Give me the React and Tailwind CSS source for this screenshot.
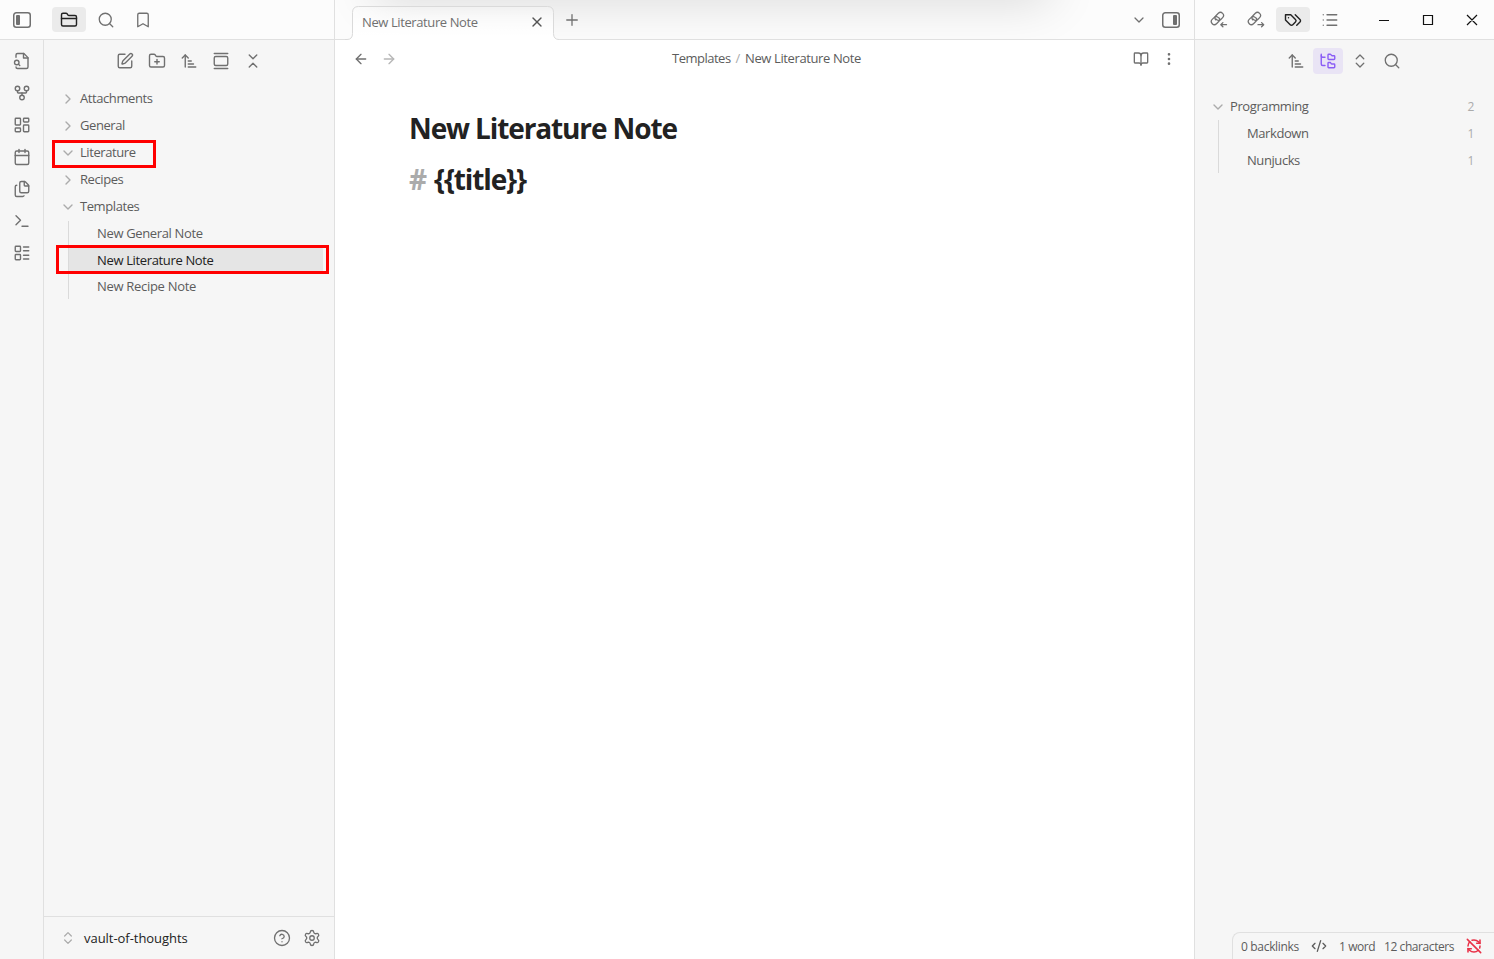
import React from 'react';
import {
  ArrowLeft, ArrowRight, ArrowUpNarrowWide, BookOpen, Bookmark, Calendar, ChevronDown, ChevronRight,
  ChevronsDownUp, ChevronsUpDown, CircleHelp, CodeXml, EllipsisVertical, Files, FolderClosed,
  FolderPlus, FolderTree, GalleryVertical, GitFork, LayoutDashboard, LayoutList, List, Plus,
  RefreshCwOff, Search, Settings, SquarePen, Terminal, X,
} from 'lucide-react';

function SidebarIcon({ right = false }) {
  return (
    <svg width="18" height="18" viewBox="0 0 18 18" fill="none" stroke="currentColor">
      <rect x="0.75" y="1.75" width="16.5" height="14.5" rx="2.5" strokeWidth="1.5" />
      <rect x={right ? 11 : 3} y="4" width="4" height="10" rx="1" fill="currentColor" stroke="none" />
    </svg>
  );
}

function LinkIcon({ out = false }) {
  return (
    <svg width="18" height="18" viewBox="0 0 18 18" fill="none" stroke="currentColor" strokeWidth="1.3" strokeLinecap="round" strokeLinejoin="round">
      <g transform="translate(0.1 0.2) scale(0.61)" strokeWidth="2.1">
        <path d="M10 13a5 5 0 0 0 7.54.54l3-3a5 5 0 0 0-7.07-7.07l-4 4a5 5 0 0 0-.3 6.700" />
        <path d="M14 11a5 5 0 0 0-7.54-.54l-3 3a5 5 0 0 0 7.07 7.07l4-4a5 5 0 0 0 .9-5" />
      </g>
      {out ? <path d="M11 13.700h5.700M14.600 11.600l2.100 2.100-2.100 2.100" /> : <path d="M16.500 13.700h-5.700M12.900 11.600l-2.100 2.100 2.100 2.100" />}
    </svg>
  );
}

function TagsIcon() {
  return (
    <svg width="18" height="18" viewBox="0 0 24 24" fill="none" stroke="currentColor" strokeWidth="1.9" strokeLinecap="round" strokeLinejoin="round">
      <path d="M9 5H2v7l6.290 6.290c.94.94 2.480.94 3.420 0l3.580-3.580c.94-.94.94-2.480 0-3.420L9 5Z" />
      <path d="M6 9.010V9" />
      <path d="m15 5 6.300 6.300a2.400 2.400 0 0 1 0 3.400L17 19" />
    </svg>
  );
}

function FileSearchIcon({ size, strokeWidth }) {
  return (
    <svg width={size} height={size} viewBox="0 0 24 24" fill="none" stroke="currentColor" strokeWidth={strokeWidth} strokeLinecap="round" strokeLinejoin="round">
      <path d="M4 20a2 2 0 0 0 2 2h12a2 2 0 0 0 2-2V7.500L14.500 2H6a2 2 0 0 0-2 2v3" />
      <path d="M14 2v6h6" />
      <circle cx="5" cy="14" r="3" />
      <path d="m9 18-1.500-1.500" />
    </svg>
  );
}

const ribbon = [FileSearchIcon, GitFork, LayoutDashboard, Calendar, Files, Terminal, LayoutList];
const tools = [SquarePen, FolderPlus, ArrowUpNarrowWide, GalleryVertical, ChevronsDownUp];

function Folder({ name, open }) {
  const Icon = open ? ChevronDown : ChevronRight;
  return (
    <div className="flex h-[27px] items-center pl-[16px]">
      <Icon size={16} strokeWidth={2.1} className="mr-[4px] shrink-0 text-[#ababab]" />
      <span>{name}</span>
    </div>
  );
}

function HeaderTab({ children, active }) {
  return (
    <div className={active ? 'flex h-[25px] w-[34px] items-center justify-center rounded bg-[#ebebeb] text-[#222]' : 'flex h-[25px] w-[34px] items-center justify-center'}>
      {children}
    </div>
  );
}

export default function App() {
  return (
    <div className="flex h-[959px] w-[1494px] flex-col overflow-hidden bg-white font-['Open_Sans','Noto_Sans',sans-serif] text-[13px] leading-[17px] tracking-[-0.42px] text-[#5c5c5c]">
      <header className="relative flex h-10 shrink-0 bg-[#fcfcfc] text-[#707070]">
        <div className="pointer-events-none absolute inset-0 overflow-hidden">
          <div className="-mt-10 ml-[375px] h-10 w-[675px] shadow-[0_0_50px_rgba(0,0,0,0.16)]" />
        </div>
        <div className="relative flex w-[335px] items-center border-r border-b border-[#e0e0e0] pl-[13px]">
          <SidebarIcon />
          <div className="ml-[21px] flex gap-[3px]">
            <HeaderTab active><FolderClosed size={18} strokeWidth={1.9} /></HeaderTab>
            <HeaderTab><Search size={18} strokeWidth={1.75} /></HeaderTab>
            <HeaderTab><Bookmark size={18} strokeWidth={1.75} /></HeaderTab>
          </div>
        </div>
        <div className="relative flex w-[860px] border-r border-[#e0e0e0]">
          <div className="w-[10px] border-b border-[#e0e0e0]" />
          <svg width="214" height="40" viewBox="0 0 214 40" className="shrink-0" fill="none">
            <defs>
              <linearGradient id="tab" x1="0" y1="0" x2="0" y2="1">
                <stop offset="0" stopColor="#fff" stopOpacity="0.2" />
                <stop offset="0.9" stopColor="#fff" />
              </linearGradient>
            </defs>
            <path d="M0 39.500H2Q7.500 39.500 7.500 33.500V12.500Q7.500 6.500 13.500 6.500H202.500Q208.500 6.500 208.500 12.500V33.500Q208.500 39.500 214 39.500V40H0Z" fill="url(#tab)" />
            <path d="M0 39.500H2Q7.500 39.500 7.500 33.500V12.500Q7.500 6.500 13.500 6.500H202.500Q208.500 6.500 208.500 12.500V33.500Q208.500 39.500 214 39.500" stroke="#dadada" />
          </svg>
          <div className="-ml-[197px] mt-[6px] flex h-8 w-[197px] shrink-0 items-center justify-between pr-[14px] tracking-[-0.4px]">
            <span>New Literature Note</span>
            <X size={16} strokeWidth={2} className="text-[#555]" />
          </div>
          <div className="flex flex-1 items-center border-b border-[#e0e0e0] pl-[4px] pr-[14px]">
            <Plus size={18} strokeWidth={1.75} />
            <ChevronDown size={16} strokeWidth={1.9} className="ml-auto mr-[15px]" />
            <SidebarIcon right />
          </div>
        </div>
        <div className="relative flex flex-1 items-center border-b border-[#e0e0e0] pl-[7px]">
          <div className="flex gap-[3px]">
            <HeaderTab><LinkIcon /></HeaderTab>
            <HeaderTab><LinkIcon out /></HeaderTab>
            <HeaderTab active><TagsIcon /></HeaderTab>
            <HeaderTab><List size={18} strokeWidth={1.75} /></HeaderTab>
          </div>
          <svg width="108" height="12" viewBox="0 0 108 12" fill="none" stroke="#111" strokeWidth="1.2" className="ml-[31px]">
            <path d="M1 6.500H11M45.500 1.500H54.500V10.500H45.500ZM89 1L99 11M99 1L89 11" />
          </svg>
        </div>
      </header>

      <div className="flex min-h-0 flex-1">
        <nav className="flex w-11 shrink-0 flex-col items-center gap-[14px] border-r border-[#e0e0e0] bg-[#f6f6f6] pt-3 text-[#707070]">
          {ribbon.map((Icon, i) => <Icon key={i} size={18} strokeWidth={1.85} />)}
        </nav>
        <aside className="flex w-[291px] shrink-0 flex-col border-r border-[#e0e0e0] bg-[#f6f6f6]">
          <div className="flex h-[45px] gap-[14px] pl-[72px] pt-3 text-[#707070]">
            {tools.map((Icon, i) => <Icon key={i} size={18} strokeWidth={1.85} />)}
          </div>
          <div className="relative flex-1">
            <Folder name="Attachments" />
            <Folder name="General" />
            <Folder name="Literature" open />
            <Folder name="Recipes" />
            <Folder name="Templates" open />
            <div className="ml-6 mt-px border-l border-[#dadada] tracking-[-0.35px]">
              <div className="flex h-[25px] items-center pl-7">New General Note</div>
              <div className="mr-[11px] flex h-[28px] items-center rounded bg-[#e5e5e5] pl-7 text-[#222]">New Literature Note</div>
              <div className="flex h-[25px] items-center pl-7 tracking-[-0.3px]">New Recipe Note</div>
            </div>
            <div className="absolute left-2 top-[55px] h-7 w-[104px] border-3 border-[#ff0000]" />
            <div className="absolute left-3 top-[160px] h-[29px] w-[273px] border-3 border-[#ff0000]" />
          </div>
          <div className="flex h-[43px] items-center border-t border-[#e0e0e0] pl-[16px] pr-[13px] text-[#707070]">
            <ChevronsUpDown size={16} strokeWidth={1.9} className="text-[#ababab]" />
            <span className="ml-[8px] font-medium tracking-[-0.04px] text-[#222]">vault-of-thoughts</span>
            <CircleHelp size={18} strokeWidth={1.75} className="ml-auto mr-3" />
            <Settings size={18} strokeWidth={1.75} />
          </div>
        </aside>
        <main className="w-[860px] shrink-0 border-r border-[#e0e0e0] bg-white">
          <div className="flex h-[38px] items-center justify-between pl-[18px] pr-[17px] text-[#707070]">
            <div className="flex w-24 gap-3"><ArrowLeft size={16} /><ArrowRight size={16} className="opacity-50" /></div>
            <div className="-mt-[2px] flex gap-[5px] pl-[3px] text-[#5c5c5c]"><span className="tracking-[-0.5px]">Templates</span><span className="text-[#ababab]">/</span><span className="tracking-[-0.38px]">New Literature Note</span></div>
            <div className="flex w-24 justify-end gap-3"><BookOpen size={16} /><EllipsisVertical size={16} /></div>
          </div>
          <div className="pl-[74px] pt-[29px] text-[28px] font-bold leading-[42px] text-[#222]">
            <h1 className="tracking-[-1.12px]">New Literature Note</h1>
            <h1 className="mt-[9px] tracking-[-1.15px]"><span className="mr-[2px] text-[#ababab]">#</span> {'{{title}}'}</h1>
          </div>
        </main>
        <aside className="flex flex-1 flex-col bg-[#f6f6f6]">
          <div className="flex h-[53px] items-start gap-[14px] pl-[92px] pt-3 text-[#707070]">
            <ArrowUpNarrowWide size={18} strokeWidth={1.85} />
            <div className="-mx-[6px] -mt-1 flex h-[26px] w-[30px] items-center justify-center rounded bg-[#e9e4f5] text-[#8a5cf5]"><FolderTree size={18} strokeWidth={1.85} /></div>
            <ChevronsUpDown size={18} strokeWidth={1.75} />
            <Search size={18} strokeWidth={1.75} />
          </div>
          <div className="pr-5">
            <div className="flex h-[27px] items-center pl-[15px]">
              <ChevronDown size={16} strokeWidth={2.1} className="mr-[4px] text-[#ababab]" />
              <span className="tracking-[-0.4px]">Programming</span><span className="ml-auto text-[12px] text-[#ababab]">2</span>
            </div>
            <div className="ml-[23px] border-l border-[#dadada]">
              <div className="flex h-[27px] items-center justify-between pl-7"><span>Markdown</span><span className="text-[12px] text-[#ababab]">1</span></div>
              <div className="flex h-[26px] items-center justify-between pl-7"><span>Nunjucks</span><span className="text-[12px] text-[#ababab]">1</span></div>
            </div>
          </div>
          <footer className="ml-auto mt-auto flex h-[27px] w-[262px] shrink-0 items-center rounded-tl-lg border-l border-t border-[#e0e0e0] pl-2 text-[12px]">
            <span className="w-[70px] shrink-0 tracking-[-0.32px]">0 backlinks</span>
            <CodeXml size={16} className="mr-[12px] shrink-0" />
            <span className="w-[45px] shrink-0">1 word</span>
            <span className="w-[82px] shrink-0">12 characters</span>
            <RefreshCwOff size={16} strokeWidth={2.3} className="shrink-0 text-[#e93147]" />
          </footer>
        </aside>
      </div>
    </div>
  );
}
